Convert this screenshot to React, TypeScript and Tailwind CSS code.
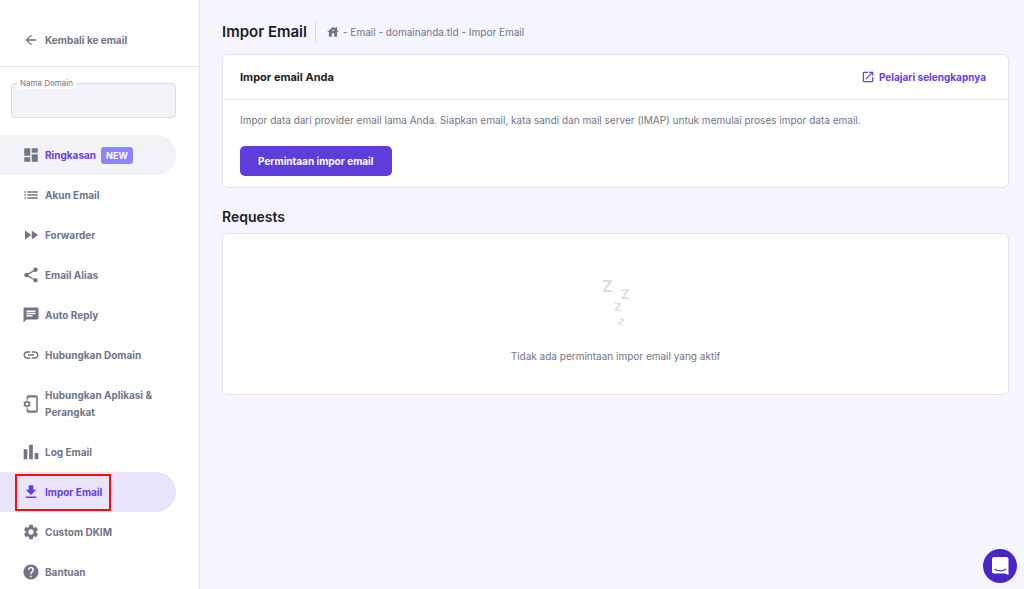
import type { ReactNode } from 'react';
import {
  MdArrowBack,
  MdBarChart,
  MdChat,
  MdDashboard,
  MdDownload,
  MdFastForward,
  MdHelp,
  MdHouse,
  MdLink,
  MdList,
  MdOpenInNew,
  MdSettings,
  MdShare,
} from 'react-icons/md';

const PhoneGearIcon = () => (
  <svg viewBox="0 0 18 18" width="18" height="18" fill="none" stroke="currentColor">
    <path
      d="M5.500 4.500V2a1 1 0 0 1 1-1h7.500a1 1 0 0 1 1 1v14a1 1 0 0 1-1 1H6.500a1 1 0 0 1-1-1v-2.500"
      strokeWidth="1.600"
    />
    <path d="M5.500 1.800h9.500M5.500 16.200h9.500" strokeWidth="1.600" />
    <circle cx="5" cy="9" r="2.200" strokeWidth="1.600" />
    <path
      d="M5 5.400v1.200M5 11.400v1.200M1.700 7.100l1.400.8M6.900 10.100l1.400.8M1.700 10.900l1.400-.8M6.900 7.900l1.400-.8"
      strokeWidth="1.600"
    />
  </svg>
);

const SleepIcon = () => (
  <svg
    viewBox="0 -8 30 64"
    width="30"
    height="64"
    fill="#dadce0"
    className="font-['Inter'] font-bold"
    aria-hidden="true"
  >
    <text x="1" y="13" fontSize="16">Z</text>
    <text x="20" y="20" fontSize="13">Z</text>
    <text x="13" y="32" fontSize="11">Z</text>
    <text x="17" y="46" fontSize="9" transform="rotate(25 20 43)">Z</text>
  </svg>
);

const ChatIcon = () => (
  <svg viewBox="0 0 34 34" width="34" height="34" aria-hidden="true">
    <path
      d="M11 8h12.500a2 2 0 0 1 2 2v16l-3.500-1.500H11a2 2 0 0 1-2-2V10a2 2 0 0 1 2-2z"
      fill="#fff"
    />
    <path
      d="M12 20.200c3 2.200 7.500 2.200 10.500 0"
      fill="none"
      stroke="#4a26c9"
      strokeWidth="1.200"
      strokeLinecap="round"
    />
  </svg>
);

type MenuItem = {
  label: string;
  icon: ReactNode;
  isNew?: boolean;
  hovered?: boolean;
  active?: boolean;
};

const menu: MenuItem[] = [
  { label: 'Ringkasan', icon: <MdDashboard size={18} />, isNew: true, hovered: true },
  { label: 'Akun Email', icon: <MdList size={18} /> },
  { label: 'Forwarder', icon: <MdFastForward size={18} /> },
  { label: 'Email Alias', icon: <MdShare size={18} /> },
  { label: 'Auto Reply', icon: <MdChat size={18} /> },
  { label: 'Hubungkan Domain', icon: <MdLink size={18} /> },
  { label: 'Hubungkan Aplikasi & Perangkat', icon: <PhoneGearIcon /> },
  { label: 'Log Email', icon: <MdBarChart size={22} className="shrink-0" /> },
  { label: 'Impor Email', icon: <MdDownload size={18} />, active: true },
  { label: 'Custom DKIM', icon: <MdSettings size={18} /> },
  { label: 'Bantuan', icon: <MdHelp size={18} /> },
];

function itemColors({ active, hovered }: MenuItem) {
  if (active) return 'bg-[#e9e3fc] text-[#673de6]';
  if (hovered) return 'bg-[#f2f3f6] text-[#673de6]';
  return 'text-[#727586]';
}

function Sidebar() {
  return (
    <aside className="w-[200px] shrink-0 overflow-hidden border-r border-[#e2e3ea] bg-white">
      <a
        href="#"
        className="flex h-[67px] items-center gap-[5px] border-b border-[#e2e3ea] pt-3.5 pl-[22px] text-[10px] font-bold text-[#727586]"
      >
        <span className="flex w-[18px] justify-center">
          <MdArrowBack size={16} />
        </span>
        Kembali ke email
      </a>
      <div className="relative mt-4 mr-[23px] ml-[11px]">
        <label
          htmlFor="domain"
          className="absolute -top-1.5 left-1.5 rounded-sm bg-white px-[3px] text-[8px] leading-3 text-[#727586]"
        >
          Nama Domain
        </label>
        <input
          id="domain"
          type="text"
          className="block h-[35px] w-full rounded-sm border border-[#dadce0] bg-[#f2f3f6] px-3 text-xs outline-none"
        />
      </div>
      <nav className="mt-[17px] mr-[23px]">
        <ul>
          {menu.map((item) => (
            <li key={item.label} className="relative">
              <a
                href="#"
                className={`flex items-center gap-[5px] rounded-r-[20px] pr-4 pl-[22px] text-[10px] leading-[17px] font-bold ${itemColors(item)}`}
              >
                <span
                  className={`flex w-[18px] shrink-0 justify-center ${item.active ? '' : 'text-[#727586]'}`}
                >
                  {item.icon}
                </span>
                <span className="pt-3 pb-[11px]">{item.label}</span>
                {item.isNew && (
                  <span className="rounded-[3px] bg-[#8c85ff] px-[5px] text-[9px] text-white">
                    NEW
                  </span>
                )}
              </a>
              {item.active && (
                <span className="pointer-events-none absolute top-0.5 bottom-px left-[15px] w-24 border-2 border-[#ff0a0a]" />
              )}
            </li>
          ))}
        </ul>
      </nav>
    </aside>
  );
}

export default function App() {
  return (
    <div className="flex h-screen overflow-hidden bg-[#f4f5ff] font-['Inter','Open_Sans',sans-serif] text-[10px] text-[#727586]">
      <Sidebar />
      <main className="min-w-0 flex-1 pt-5 pr-[15px] pl-[22px]">
        <header className="flex h-6 items-center">
          <h1 className="text-[15px] font-semibold text-[#1d1e20]">Impor Email</h1>
          <nav
            aria-label="Breadcrumb"
            className="ml-2 flex h-[22px] items-center gap-[3px] border-l border-[#dadce0] pl-[10px]"
          >
            <a href="#" aria-label="Home">
              <MdHouse size={14} />
            </a>
            <span>- Email - domainanda.tld - Impor Email</span>
          </nav>
        </header>

        <section className="mt-[10px] rounded-md border border-[#e2e3ea] bg-white">
          <div className="flex h-[45px] items-center justify-between border-b border-[#e2e3ea] pr-[22px] pl-[17px]">
            <h2 className="text-[11px] font-bold text-[#1d1e20]">Impor email Anda</h2>
            <a href="#" className="flex items-center gap-1 font-bold text-[#673de6]">
              <MdOpenInNew size={14} />
              Pelajari selengkapnya
            </a>
          </div>
          <div className="px-[17px] pt-3 pb-[11px]">
            <p className="leading-4">
              Impor data dari provider email lama Anda. Siapkan email, kata sandi dan mail
              server (IMAP) untuk memulai proses impor data email.
            </p>
            <button
              type="button"
              className="mt-[18px] h-[30px] rounded-[5px] bg-[#5f3ddb] px-[18px] font-bold text-white"
            >
              Permintaan impor email
            </button>
          </div>
        </section>

        <h2 className="mt-[18px] text-sm leading-[22px] font-semibold text-[#1d1e20]">
          Requests
        </h2>
        <section className="mt-[5px] flex flex-col items-center rounded-md border border-[#e2e3ea] bg-white pt-[37px] pb-[30px]">
          <SleepIcon />
          <p className="mt-[13px] leading-4">Tidak ada permintaan impor email yang aktif</p>
        </section>
      </main>
      <button
        type="button"
        aria-label="Chat"
        className="fixed right-[7px] bottom-1.5 rounded-full bg-[#4a26c9]"
      >
        <ChatIcon />
      </button>
    </div>
  );
}
